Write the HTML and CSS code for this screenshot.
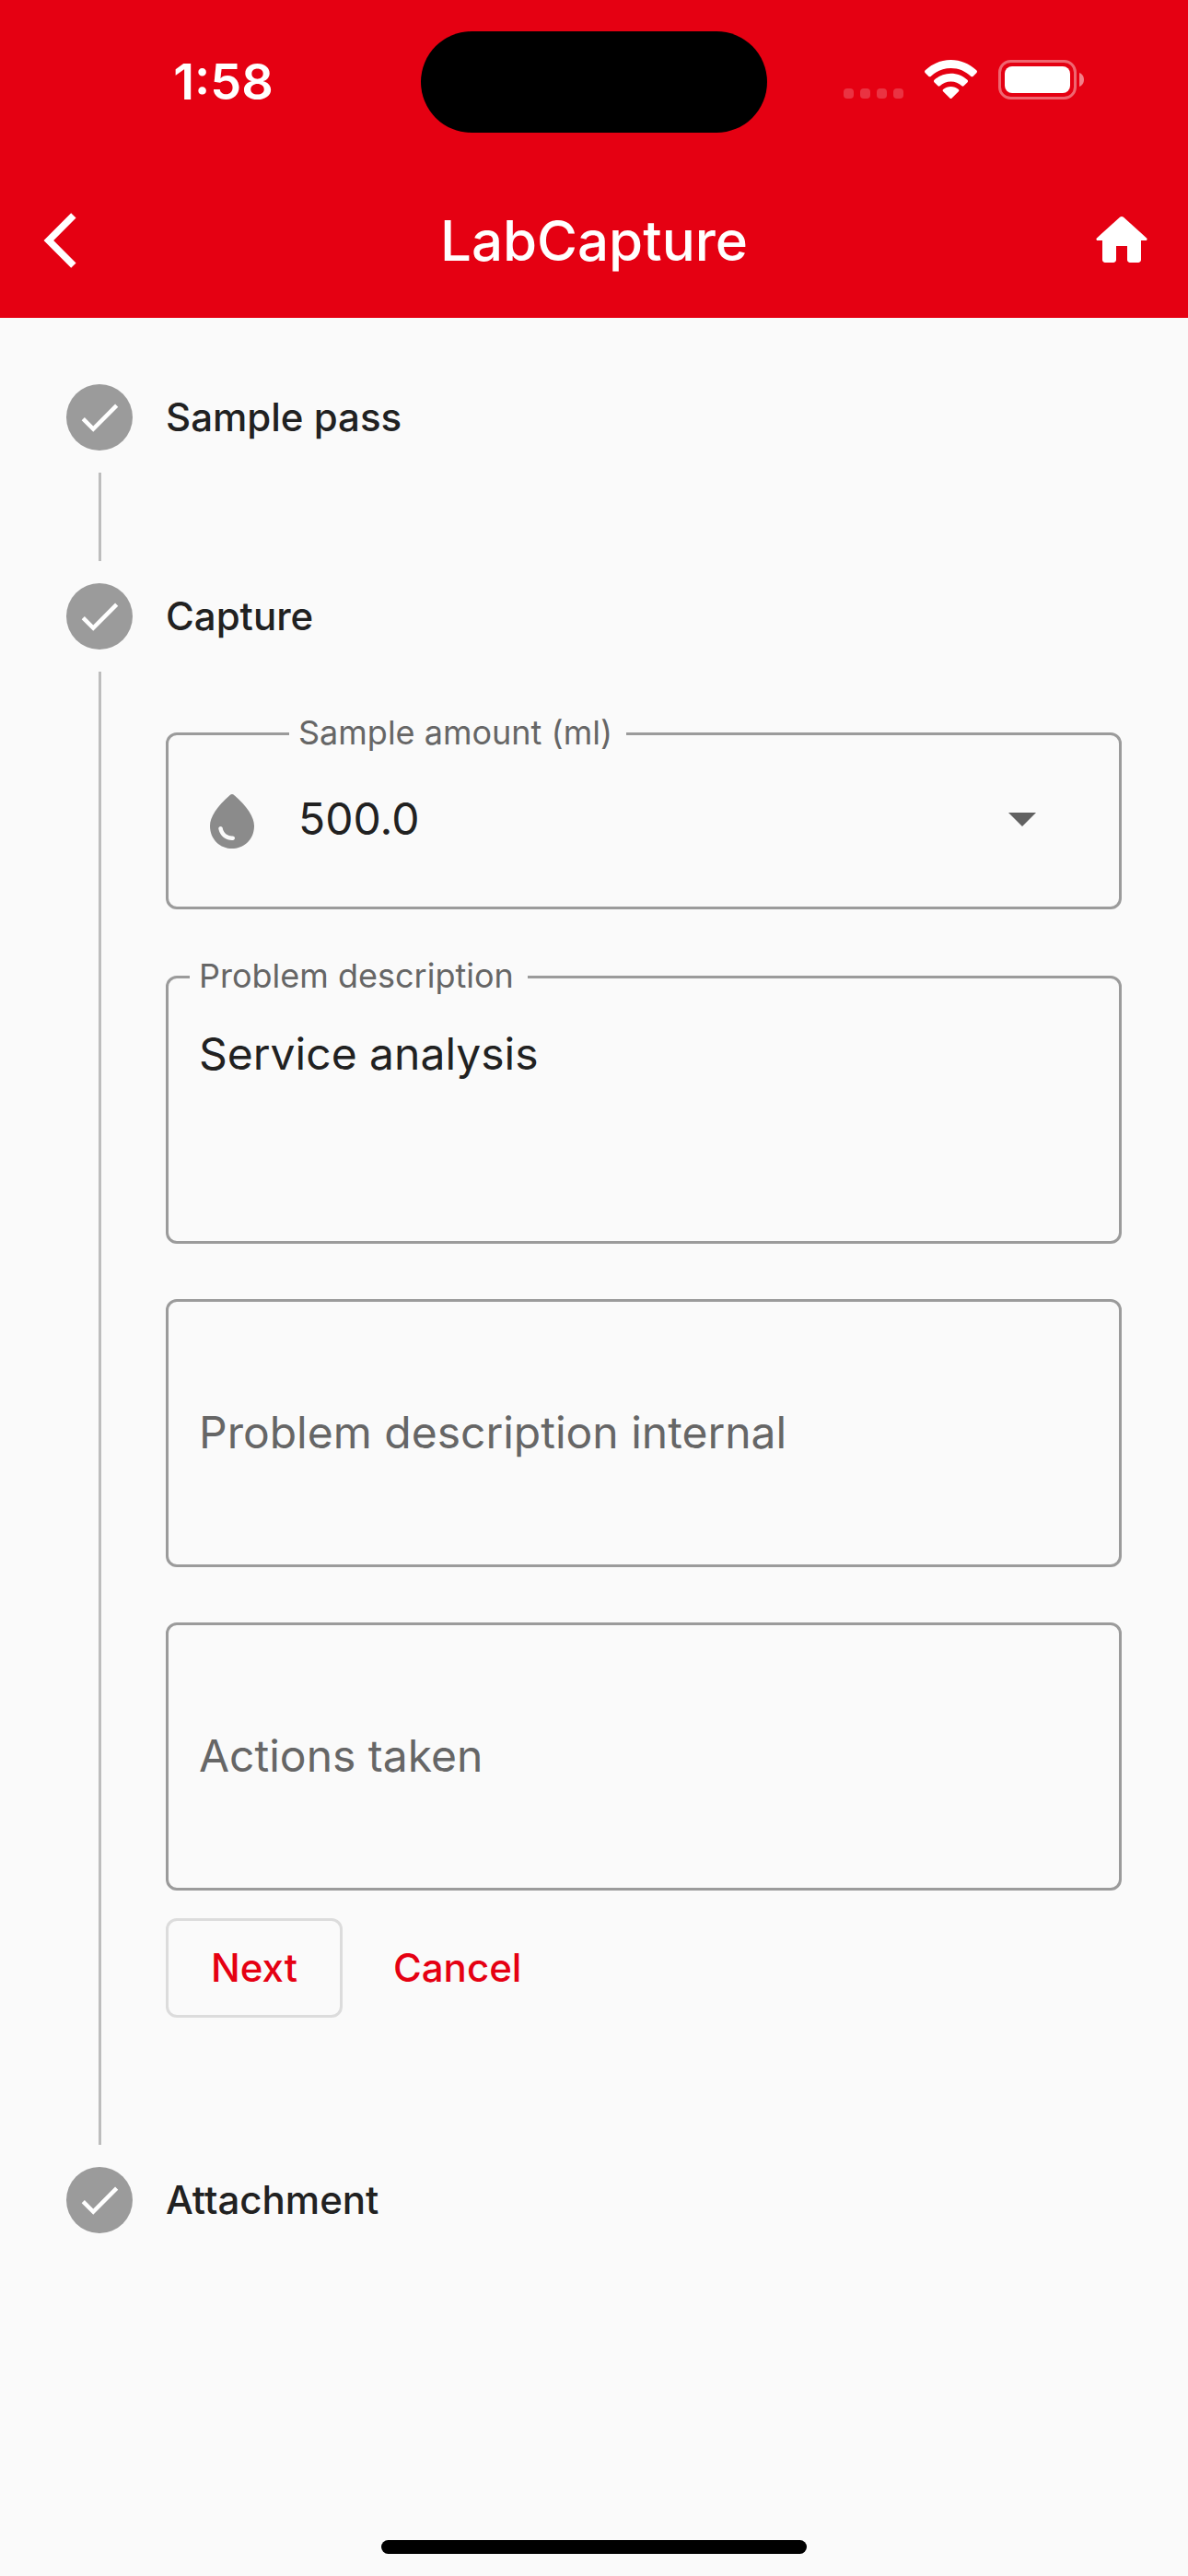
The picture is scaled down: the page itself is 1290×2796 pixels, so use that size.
FILE: index.html
```html
<!DOCTYPE html>
<html lang="en">
<head>
    <meta charset="UTF-8" />
    <meta name="viewport" content="width=device-width, initial-scale=1.0"/>
    <title>LabCapture</title>
    <link rel="stylesheet" href="styles.css">
</head>
<body>
<header class="header">
    <div class="status-bar">
        <span class="time">1:58</span>
        <div class="island"></div>
        <div class="status-icons">
            <svg class="signal" width="65" height="42" viewBox="0 0 65 42">
                <rect x="0" y="31" width="11" height="11" rx="4"/>
                <rect x="18" y="31" width="11" height="11" rx="4"/>
                <rect x="36" y="31" width="11" height="11" rx="4"/>
                <rect x="54" y="31" width="11" height="11" rx="4"/>
            </svg>
            <svg width="57" height="42" viewBox="0 0 57 42">
                <path d="M28.500 0C39 0 48.500 4.200 56.300 11.300C57.200 12.200 57.200 13.200 56.500 14L52.500 17.900C51.900 18.500 51.100 18.500 50.400 17.900C44.500 12.200 37 8.900 28.500 8.900S12.500 12.200 6.600 17.900C5.900 18.500 5.100 18.500 4.500 17.900L.500 14C-.2 13.200-.2 12.200.700 11.300C8.500 4.200 18 0 28.500 0Z"/>
                <path d="M28.500 14.700C35.200 14.700 41.500 17.300 46.500 21.700C47.300 22.500 47.300 23.400 46.600 24.200L42.500 28.200C41.900 28.800 41.100 28.800 40.400 28.200C37.200 25.300 33 23.600 28.500 23.600S19.800 25.300 16.600 28.200C15.900 28.800 15.100 28.800 14.500 28.200L10.400 24.200C9.700 23.400 9.700 22.500 10.500 21.700C15.500 17.300 21.800 14.700 28.500 14.700Z"/>
                <path d="M28.500 28.900C31.600 28.900 34.500 30 36.800 31.900C37.600 32.700 37.500 33.600 36.900 34.200L29.600 41.400C28.900 42.100 28.100 42.100 27.400 41.400L20.100 34.200C19.500 33.600 19.400 32.700 20.200 31.900C22.500 30 25.400 28.900 28.500 28.900Z"/>
            </svg>
            <svg width="95" height="43" viewBox="0 0 95 43">
                <rect class="battery-shell" x="1.500" y="1.500" width="82" height="40" rx="12"/>
                <path class="battery-cap" d="M88 14c3 1 5 4 5 7.500s-2 6.500-5 7.500z"/>
                <rect x="7" y="7" width="71" height="29" rx="8"/>
            </svg>
        </div>
    </div>
    <nav class="app-bar">
        <button type="button" class="icon-btn back" aria-label="Back">
            <svg class="icon" viewBox="0 0 24 24"><path d="M17.510 3.870 15.730 2.100 5.840 12l9.900 9.900 1.770-1.770L9.380 12z"/></svg>
        </button>
        <h1>LabCapture</h1>
        <button type="button" class="icon-btn" aria-label="Home">
            <svg class="icon" viewBox="0 0 24 24"><path d="M10 19v-5h4v5c0 .55.45 1 1 1h3c.55 0 1-.45 1-1v-7h1.700c.46 0 .68-.57.33-.87L12.670 3.600c-.38-.34-.96-.34-1.340 0l-8.360 7.530c-.34.3-.13.87.33.87H5v7c0 .55.45 1 1 1h3c.55 0 1-.45 1-1z"/></svg>
        </button>
    </nav>
</header>

<main>
    <ol class="stepper">
        <li class="step">
            <div class="rail">
                <span class="badge"><svg viewBox="0 0 24 24"><path d="M9 16.170 4.830 12l-1.420 1.410L9 19 21 7l-1.410-1.410z"/></svg></span>
                <span class="line"></span>
            </div>
            <h2>Sample pass</h2>
        </li>
        <li class="step">
            <div class="rail">
                <span class="badge"><svg viewBox="0 0 24 24"><path d="M9 16.170 4.830 12l-1.420 1.410L9 19 21 7l-1.410-1.410z"/></svg></span>
                <span class="line"></span>
            </div>
            <div class="step-body">
                <h2>Capture</h2>
                <form class="capture-form">
                    <div class="field amount">
                        <label class="floating" for="amount">Sample amount (ml)</label>
                        <svg class="icon drop" viewBox="0 0 24 24"><path d="M12.660 2.580c-.38-.33-.95-.33-1.330 0C6.450 6.880 4 10.620 4 13.800c0 4.980 3.800 8.200 8 8.200s8-3.220 8-8.200c0-3.180-2.450-6.920-7.340-11.220zM7.830 14c.37 0 .67.26.74.62.41 2.220 2.280 2.980 3.640 2.870.43-.02.79.32.79.75 0 .4-.32.73-.72.75-2.130.13-4.620-1.090-5.190-4.120-.08-.45.28-.87.74-.87z"/></svg>
                        <div class="select-wrap">
                            <select id="amount" name="amount">
                                <option>500.0</option>
                            </select>
                            <svg class="icon caret" viewBox="0 0 24 24"><path d="M7 10l5 5 5-5z"/></svg>
                        </div>
                    </div>
                    <div class="field">
                        <label class="floating" for="problem">Problem description</label>
                        <textarea id="problem" name="problem">Service analysis</textarea>
                    </div>
                    <div class="field">
                        <label class="resting" for="internal">Problem description internal</label>
                        <textarea id="internal" name="internal"></textarea>
                    </div>
                    <div class="field">
                        <label class="resting" for="actions">Actions taken</label>
                        <textarea id="actions" name="actions"></textarea>
                    </div>
                    <div class="actions">
                        <button type="button" class="btn btn-outlined">Next</button>
                        <button type="button" class="btn">Cancel</button>
                    </div>
                </form>
            </div>
        </li>
        <li class="step">
            <div class="rail">
                <span class="badge"><svg viewBox="0 0 24 24"><path d="M9 16.170 4.830 12l-1.420 1.410L9 19 21 7l-1.410-1.410z"/></svg></span>
            </div>
            <h2>Attachment</h2>
        </li>
    </ol>
</main>

<footer class="home-indicator"></footer>
</body>
</html>
```

FILE: styles.css
```css
* {
    box-sizing: border-box;
}
body {
    margin: 0;
    min-height: 100vh;
    display: flex;
    flex-direction: column;
    font-family: Inter, "Liberation Sans", sans-serif;
    background: #fafafa;
    color: #212121;
}
h1, h2 {
    margin: 0;
    font-weight: 500;
}
button, select, textarea {
    font-family: inherit;
    color: inherit;
    background: none;
    border: none;
    margin: 0;
    padding: 0;
}
svg {
    display: block;
    fill: currentColor;
}
.icon {
    width: 72px;
    height: 72px;
    flex: none;
}

/* header */
.header {
    background: #e50012;
    color: white;
}
.status-bar {
    display: grid;
    grid-template-columns: 1fr 376px 1fr;
    align-items: center;
    height: 177px;
    padding: 0 28px;
}
.time {
    font-size: 54px;
    font-weight: 600;
    text-align: center;
}
.island {
    height: 110px;
    border-radius: 55px;
    background: black;
}
.status-icons {
    display: flex;
    justify-content: center;
    gap: 23px;
    padding-bottom: 4px;
}
.signal {
    opacity: 0.2;
}
.battery-shell {
    fill: none;
    stroke: white;
    stroke-width: 3px;
    opacity: 0.4;
}
.battery-cap {
    opacity: 0.5;
}
.app-bar {
    display: flex;
    align-items: center;
    justify-content: space-between;
    height: 168px;
    padding: 0 36px 0 30px;
}
h1 {
    font-size: 60px;
}
.icon-btn {
    cursor: pointer;
}
.back {
    padding-right: 6px;
}

/* stepper */
.stepper {
    list-style: none;
    margin: 0;
    padding: 72px;
}
.step {
    display: grid;
    grid-template-columns: 72px 1fr;
    gap: 36px;
}
.rail {
    display: flex;
    flex-direction: column;
    align-items: center;
}
.badge {
    display: flex;
    align-items: center;
    justify-content: center;
    width: 72px;
    height: 72px;
    border-radius: 50%;
    background: #9b9b9b;
    color: white;
}
.badge svg {
    width: 54px;
    height: 54px;
}
.line {
    flex: 1;
    width: 3px;
    min-height: 96px;
    margin: 24px 0;
    background: #bdbdbd;
}
h2 {
    font-size: 42px;
    line-height: 72px;
}

/* form */
.capture-form {
    display: flex;
    flex-direction: column;
    padding: 90px 0 162px;
}
.field {
    position: relative;
    height: 291px;
    margin-bottom: 60px;
    border: 3px solid #9b9b9b;
    border-radius: 12px;
}
.amount {
    display: flex;
    align-items: center;
    height: 192px;
    margin-bottom: 72px;
    padding-left: 33px;
}
.floating {
    position: absolute;
    top: -25px;
    left: 23px;
    padding: 0 15px 0 10px;
    font-size: 36px;
    line-height: 44px;
    color: #666;
    background: #fafafa;
}
.amount .floating {
    left: 131px;
}
.resting {
    position: absolute;
    top: 0;
    bottom: 3px;
    left: 33px;
    display: flex;
    align-items: center;
    font-size: 48px;
    color: #666;
    pointer-events: none;
}
.drop {
    color: #8b8b8b;
}
.select-wrap {
    flex: 1;
    display: grid;
    align-items: center;
    margin: 0 69px 6px 36px;
}
.select-wrap > * {
    grid-area: 1 / 1;
}
select {
    width: 100%;
    height: 72px;
    appearance: none;
    font-size: 48px;
}
.caret {
    justify-self: end;
    color: #616161;
    pointer-events: none;
}
textarea {
    display: block;
    width: 100%;
    height: 100%;
    padding: 52px 33px;
    font-size: 48px;
    line-height: 60px;
    resize: none;
}
.actions {
    display: flex;
    gap: 9px;
    margin-top: -30px;
}
.btn {
    height: 108px;
    padding: 0 46px 2px;
    font-size: 42px;
    font-weight: 500;
    color: #e50012;
    cursor: pointer;
}
.btn-outlined {
    border: 3px solid #dcdcdc;
    border-radius: 12px;
}

.home-indicator {
    width: 462px;
    height: 15px;
    margin: auto auto 24px;
    border-radius: 8px;
    background: black;
}
```
